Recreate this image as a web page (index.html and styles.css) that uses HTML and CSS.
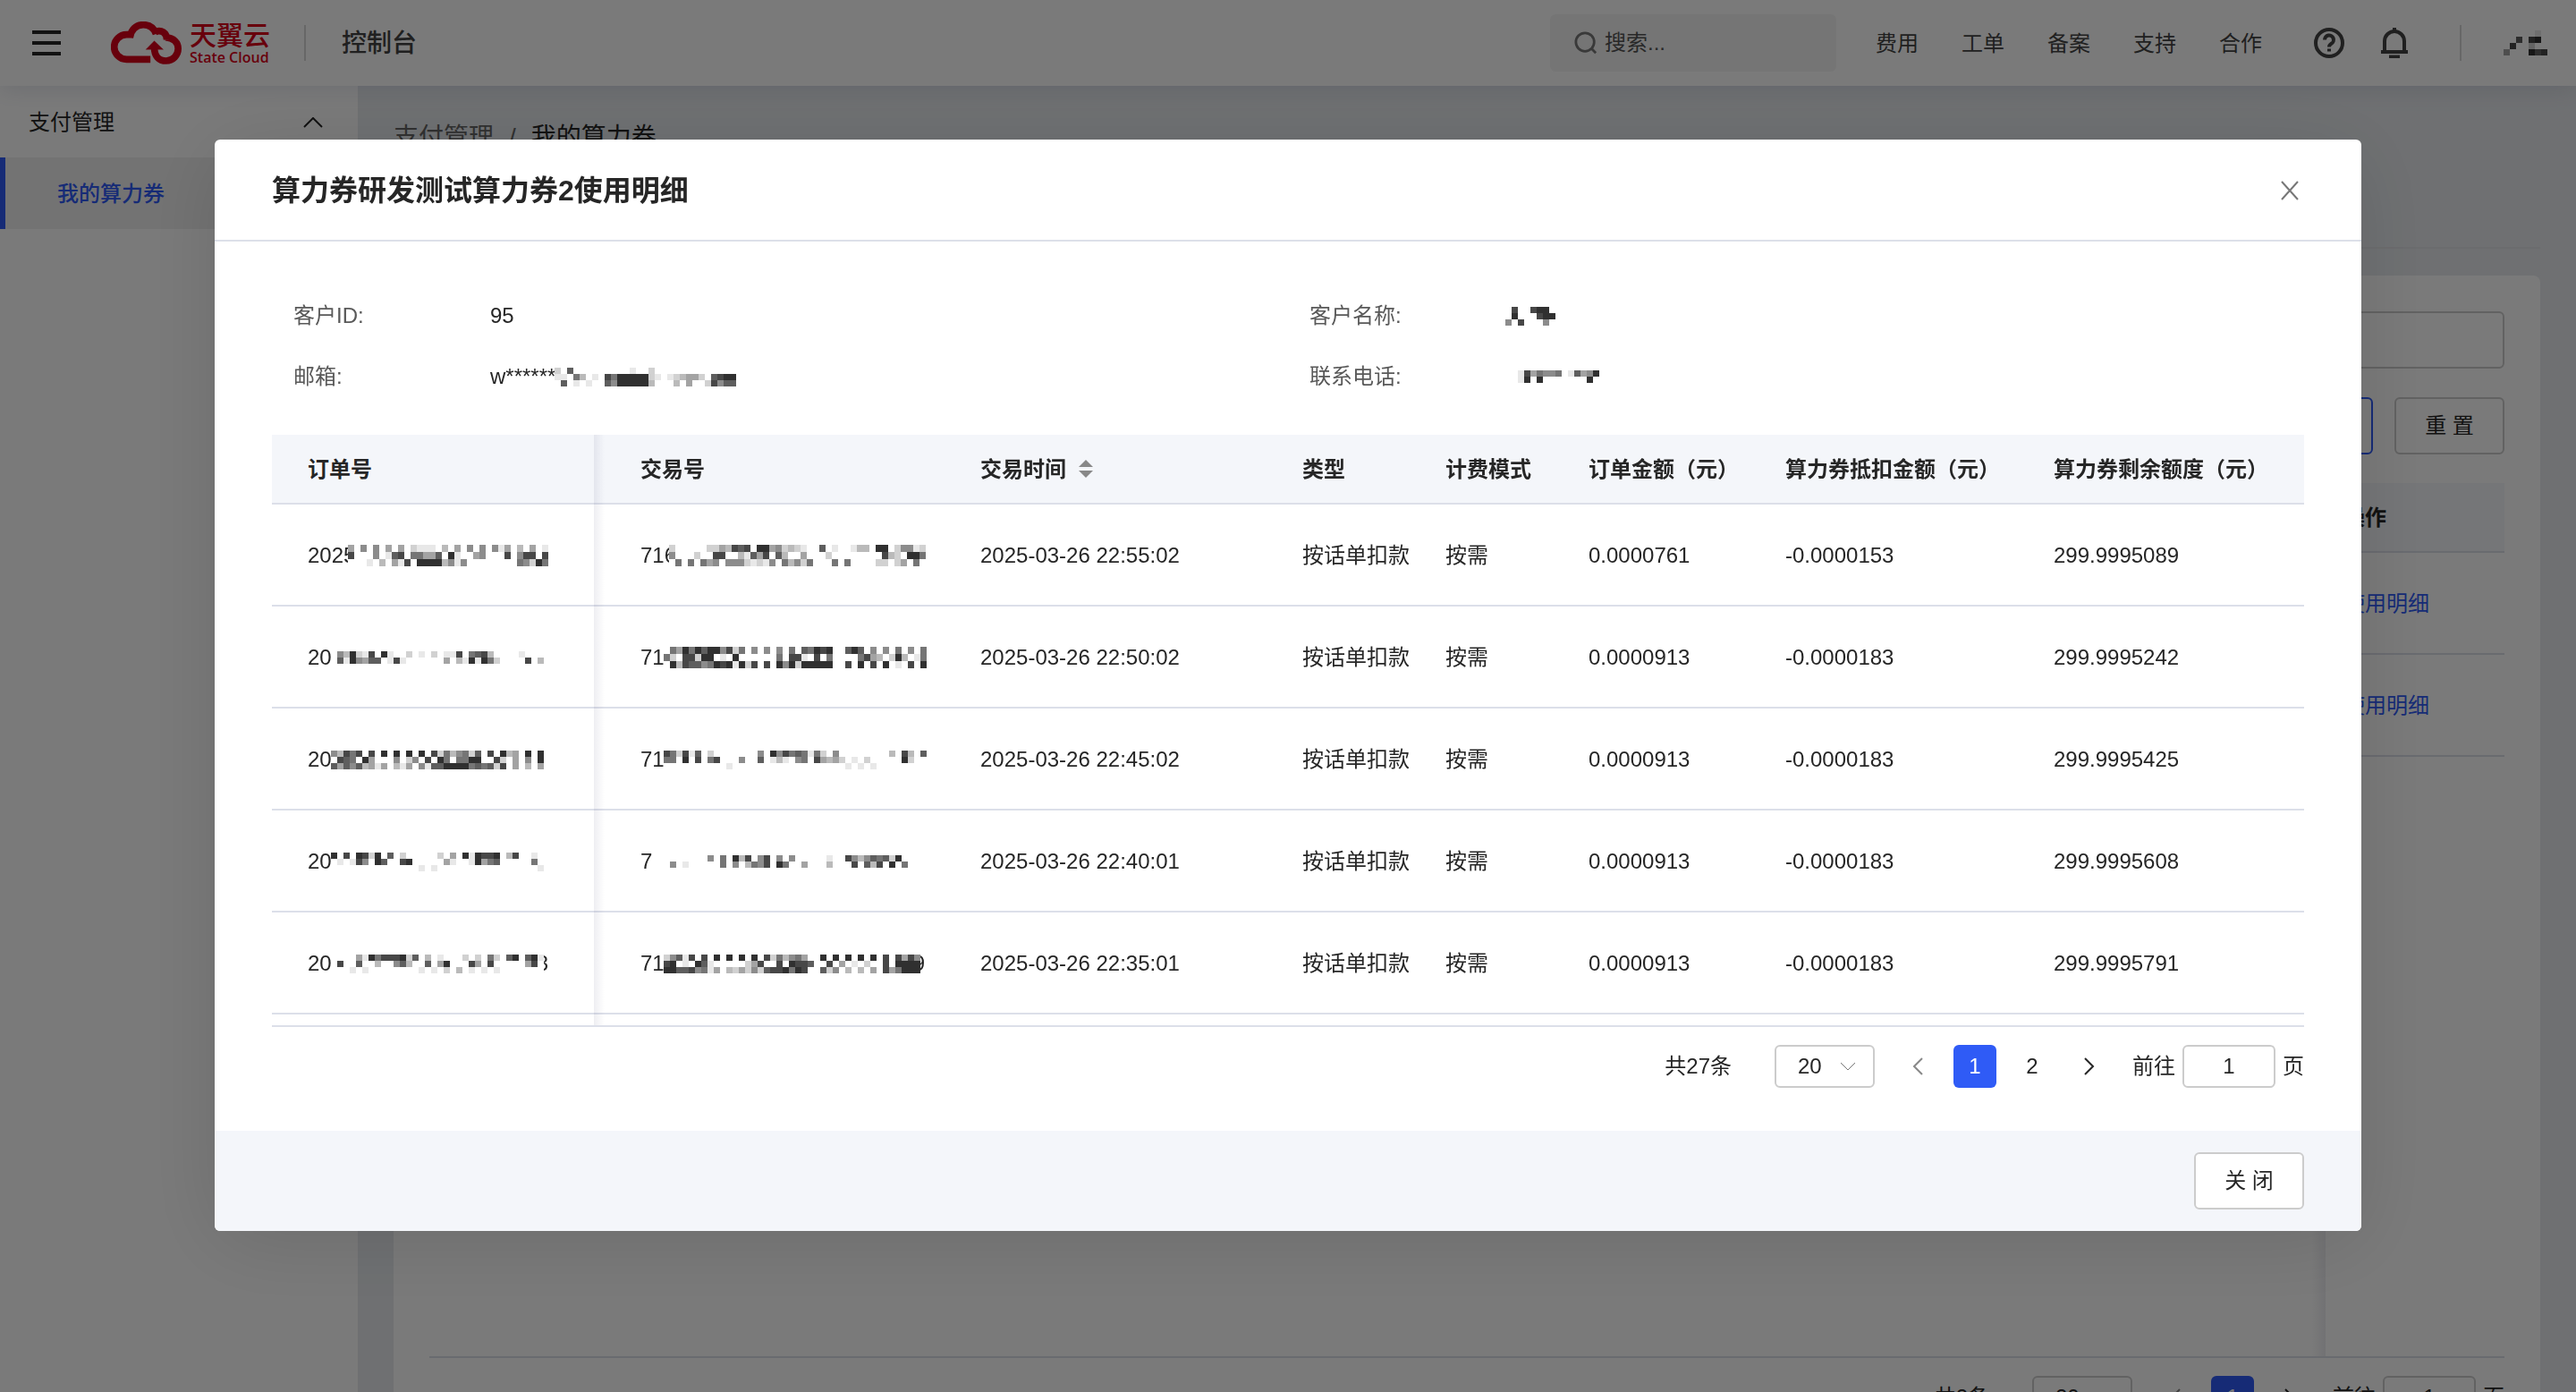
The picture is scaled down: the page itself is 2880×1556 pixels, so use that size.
FILE: index.html
```html
<!DOCTYPE html>
<html lang="zh-CN">
<head>
  <meta charset="UTF-8" />
  <meta name="viewport" content="width=device-width, initial-scale=1.0" />
  <title>我的算力券 - 控制台</title>
  <link rel="stylesheet" href="styles.css">
</head>
<body>
  <div class="app">
    <!-- Top bar -->
    <header class="topbar">
      <button class="menu-btn" aria-label="菜单"><span></span><span></span><span></span></button>
      <a class="logo" href="#">
        <svg class="logo-cloud" viewBox="312 42 236 144">
          <path d="M444 169H364A41.5 41.5 0 0 1 364 86H382M375 97C378 70 396 53 420 53C440 53 456 64 463 84M460 77C480 68 500 80 499 104M495 95C524 98 537 114 537 133A40 41 0 0 1 497 174C472 174 457 158 457 128" fill="none" stroke="#d9001b" stroke-width="23" />
          <path d="M457 107L487 136H429Z" fill="#d9001b" />
        </svg>
        <span class="logo-text"><b>天翼云</b><small>State Cloud</small></span>
      </a>
      <i class="divider"></i>
      <span class="console">控制台</span>
      <label class="search">
        <svg viewBox="0 0 28 28"><circle cx="13" cy="13" r="11" /><path d="M21 21l5 5" /></svg>
        <input type="text" placeholder="搜索..." aria-label="搜索" />
      </label>
      <nav>
        <a href="#">费用</a>
        <a href="#">工单</a>
        <a href="#">备案</a>
        <a href="#">支持</a>
        <a href="#">合作</a>
      </nav>
      <button class="icon-btn help" aria-label="帮助">
        <svg viewBox="0 0 34 34"><circle cx="17" cy="17" r="15" /><path d="M12 13.5a5 5 0 1 1 7.5 4.3C17.5 19 17 19.7 17 21.5M17 23.5v3" /></svg>
      </button>
      <button class="icon-btn bell" aria-label="通知">
        <svg viewBox="0 0 34 34"><path d="M2 27h30M6 27V15a11 11 0 0 1 22 0v12M17 0v5M11 32.5h12" /></svg>
      </button>
      <i class="divider"></i>
      <svg class="mosaic user" data-rows=".....1.|..7.89.|.8..2..|4...978"></svg>
    </header>

    <div class="layout">
      <aside>
        <button class="menu-group">支付管理
          <svg viewBox="0 0 22 12"><path d="M1 11L11 1l10 10" /></svg>
        </button>
        <a class="menu-item" href="#">我的算力券</a>
      </aside>

      <main>
        <div class="breadcrumb"><a href="#">支付管理</a><span>/</span><b>我的算力券</b></div>
        <section class="card">
          <input class="filter" type="text" aria-label="筛选" />
          <div class="actions">
            <button class="btn primary">查 询</button>
            <button class="btn">重 置</button>
          </div>
          <div class="list">
            <table>
              <thead><tr><th>算力券</th><th class="op">操作</th></tr></thead>
              <tbody>
                <tr><td></td><td class="op"><a href="#">使用明细</a></td></tr>
                <tr><td></td><td class="op"><a href="#">使用明细</a></td></tr>
              </tbody>
            </table>
            <div class="fixed-edge"></div>
          </div>
          <div class="pagination">
            <span class="total">共2条</span>
            <span class="size">
              <select aria-label="每页条数"><option>20</option></select>
              <svg viewBox="0 0 16 10"><path d="M0 1l8 8 8-8" /></svg>
            </span>
            <button class="page prev" aria-label="上一页"><svg viewBox="0 0 12 20"><path d="M11 1L2 10l9 9" /></svg></button>
            <button class="page active">1</button>
            <button class="page" aria-label="下一页"><svg viewBox="0 0 12 20"><path d="M1 1l9 9-9 9" /></svg></button>
            <label class="jump">前往<input type="text" value="1" />页</label>
          </div>
        </section>
      </main>
    </div>
  </div>

  <!-- Usage detail dialog -->
  <div class="mask">
    <div class="modal" role="dialog" aria-labelledby="modal-title">
      <div class="modal-header">
        <h2 id="modal-title">算力券研发测试算力券2使用明细</h2>
        <button class="close" aria-label="关闭"><svg viewBox="0 0 22 22"><path d="M2 1l18 20M20 1L2 21" /></svg></button>
      </div>
      <div class="modal-body">
        <dl class="info">
          <div><dt>客户ID:</dt><dd>95</dd></div>
          <div><dt>客户名称:</dt><dd><svg class="mosaic" data-rows=".8..899.|.9...899|5.8...5."></svg></dd></div>
          <div><dt>邮箱:</dt><dd>w******<svg class="mosaic" data-rows="2.7.........1..2.............|11.63.1.869999921.12344 2.7899|.7.1.1..75999993...3.4..28577"></svg></dd></div>
          <div><dt>联系电话:</dt><dd><svg class="mosaic" data-rows="..1846556.17459|..19.9.......9."></svg></dd></div>
        </dl>

        <div class="table-scroll">
          <table class="detail">
            <colgroup>
              <col class="c-order"><col class="c-trade"><col class="c-time"><col class="c-type"><col class="c-mode"><col class="c-amount"><col class="c-deduct"><col class="c-left">
            </colgroup>
            <thead>
              <tr>
                <th>订单号</th>
                <th>交易号</th>
                <th>交易时间<svg class="sort" viewBox="0 0 16 20"><path d="M8 0l8 8H0zM8 20l8-8H0z" /></svg></th>
                <th>类型</th>
                <th>计费模式</th>
                <th>订单金额（元）</th>
                <th>算力券抵扣金额（元）</th>
                <th>算力券剩余额度（元）</th>
              </tr>
            </thead>
            <tbody>
              <tr>
                <td><div class="no">2025<svg class="mosaic tall lap" data-rows="4.5.5.4.4.2111.3.4.5.5.514.3.4.1|8...5.178.66447.91..45...8.588.8|...1.3.418.99993515........65296"></svg></div></td>
                <td><div class="no">716<svg class="mosaic tall lap" data-rows="2.....2243878.99452321..7.1..133.99.25512|5...2..88..31748.73..4...2........832.996|.6.6.645.55521215.63526...6.6....22.24.6."></svg></div></td>
                <td>2025-03-26 22:55:02</td><td>按话单扣款</td><td>按需</td><td>0.0000761</td><td>-0.0000153</td><td>299.9995089</td>
              </tr>
              <tr>
                <td><div class="no">20<svg class="mosaic" data-rows=".539218.91..2.1.2.118.6783....1...|.7195477.181......4.3191962....8.3"></svg></div></td>
                <td><div class="no">71<svg class="mosaic tall" data-rows=".649697995826.5.5.5.6.76989..797.5.5.6.5.6|62.88299.1.9......6.881.8.6....6843.293.16|.93877569891928.8.959299999..8.9.8.9.1.8.9"></svg></div></td>
                <td>2025-03-26 22:50:02</td><td>按话单扣款</td><td>按需</td><td>0.0000913</td><td>-0.0000183</td><td>299.9995242</td>
              </tr>
              <tr>
                <td><div class="no">20<svg class="mosaic" data-rows="53868.8.9.9.9.9.82635627.8.934.9.9|.876.94...5.25.8.96.6699..82.4.5.9|74757341 4.314.5177999967672 8.4.3.4"></svg></div></td>
                <td><div class="no">71<svg class="mosaic" data-rows="862817.2.......5.95867616 2.5........3.83.7|66.9.8.68...5..7.131.56.84342.1.2.....92..|..........1..................1.1.1........"></svg></div></td>
                <td>2025-03-26 22:45:02</td><td>按话单扣款</td><td>按需</td><td>0.0000913</td><td>-0.0000183</td><td>299.9995425</td>
              </tr>
              <tr>
                <td><div class="no">20<svg class="mosaic" data-rows="9.8.9829.7.2.....2.4.919889.38..1.|.1.185.97..89.....41..19467.....6.|..............1.1................1"></svg></div></td>
                <td><div class="no">7<svg class="mosaic gap" data-rows=".......5.6.938.58.5.5.....1..853576729.|.5.1.....6.5.3658.96..4...3...8.738.9.6"></svg></div></td>
                <td>2025-03-26 22:40:01</td><td>按话单扣款</td><td>按需</td><td>0.0000913</td><td>-0.0000183</td><td>299.9995608</td>
              </tr>
              <tr>
                <td><div class="no">20<svg class="mosaic" data-rows="....4196888927.3.1...2.2.62.79.791|.8..7..3..573..7.49...84.8.....48.|...1.1........1.1.2.3.1.1.1......."></svg><span class="tail">3</span></div></td>
                <td><div class="no">71<svg class="mosaic" data-rows="25718.8.9.9.9.9.8263564..9.9.9.9.9.8.8485|89.1.971.....248..8.9887..8.4.1.2..8.9999|997785614.32425278896 98..725.3.3.4.846999"></svg><span class="tail">9</span></div></td>
                <td>2025-03-26 22:35:01</td><td>按话单扣款</td><td>按需</td><td>0.0000913</td><td>-0.0000183</td><td>299.9995791</td>
              </tr>
              <tr><td></td><td></td><td></td><td></td><td></td><td></td><td></td><td></td></tr>
            </tbody>
          </table>
        </div>

        <div class="pagination">
          <span class="total">共27条</span>
          <span class="size">
            <select aria-label="每页条数"><option>20</option></select>
            <svg viewBox="0 0 16 10"><path d="M0 1l8 8 8-8" /></svg>
          </span>
          <button class="page prev" aria-label="上一页"><svg viewBox="0 0 12 20"><path d="M11 1L2 10l9 9" /></svg></button>
          <button class="page active">1</button>
          <button class="page">2</button>
          <button class="page" aria-label="下一页"><svg viewBox="0 0 12 20"><path d="M1 1l9 9-9 9" /></svg></button>
          <label class="jump">前往<input type="text" value="1" />页</label>
        </div>
      </div>
      <div class="modal-footer"><button class="btn">关 闭</button></div>
    </div>
  </div>

  <script src="mosaic.js"></script>
</body>
</html>
```
FILE: styles.css
```css
* {
  box-sizing: border-box;
}
body {
  margin: 0;
  font-family: "Liberation Sans", "Noto Sans CJK SC", sans-serif;
  font-size: 24px;
  line-height: 36px;
  color: #262626;
  overflow: hidden;
}
button, input, select {
  font: inherit;
  color: inherit;
  margin: 0;
}
button {
  background: none;
  border: none;
  padding: 0;
  cursor: pointer;
}
a {
  color: inherit;
  text-decoration: none;
}
svg {
  flex: none;
  fill: none;
  stroke: currentColor;
}
.app {
  display: flex;
  flex-direction: column;
  height: 100vh;
  overflow: hidden;
}

/* Top bar */
.topbar {
  position: relative;
  z-index: 2;
  display: flex;
  align-items: center;
  flex: none;
  height: 96px;
  padding: 0 32px 0 36px;
  background: #fff;
  box-shadow: 0 4px 24px rgba(60, 70, 110, 0.14);
}
.menu-btn {
  display: flex;
  flex-direction: column;
  gap: 8px;
  width: 32px;
  margin-right: 56px;
}
.menu-btn span {
  height: 4px;
  background: #262626;
}
.logo {
  display: flex;
  align-items: center;
  gap: 9px;
  color: #d9001b;
}
.logo-cloud {
  width: 79px;
  height: 48px;
}
.logo-text {
  display: flex;
  flex-direction: column;
  width: 88px;
}
.logo-text b {
  font-size: 30px;
  font-weight: 500;
  line-height: 32px;
  white-space: nowrap;
}
.logo-text small {
  font: 600 16px/16px "Open Sans", sans-serif;
  white-space: nowrap;
}
.divider {
  width: 2px;
  height: 40px;
  background: #d8d8d8;
  margin: 0 40px;
}
.console {
  padding-top: 2px;
  font-size: 28px;
  font-weight: 500;
  color: #444;
  margin-right: auto;
}
.search {
  display: flex;
  align-items: center;
  gap: 8px;
  width: 320px;
  height: 64px;
  padding: 0 27px;
  background: #f5f5f5;
  border-radius: 6px;
  margin-right: 44px;
}
.search svg {
  width: 26px;
  height: 26px;
  color: #777;
  stroke-width: 3;
}
.search input {
  width: 200px;
  border: none;
  background: none;
  padding: 0;
}
.search input::placeholder {
  color: #555;
  opacity: 1;
}
nav {
  display: flex;
  gap: 48px;
  padding-top: 2px;
  color: #444;
  margin-right: 58px;
}
.icon-btn {
  width: 34px;
  height: 34px;
}
.icon-btn svg {
  display: block;
  width: 34px;
  height: 34px;
  color: #444;
  stroke-width: 4;
}
.bell {
  margin: 0 16px 0 39px;
}
.bell + .divider {
  margin-right: 48px;
}

/* Side menu */
.layout {
  display: flex;
  flex: 1;
  min-height: 0;
}
aside {
  flex: none;
  width: 400px;
  background: #fff;
  box-shadow: 0 0 20px rgba(60, 70, 110, 0.12);
}
.menu-group {
  display: flex;
  align-items: center;
  justify-content: space-between;
  width: 100%;
  height: 80px;
  padding: 2px 39px 0 32px;
}
.menu-group svg {
  width: 22px;
  height: 12px;
  stroke-width: 2;
}
.menu-item {
  display: flex;
  align-items: center;
  height: 80px;
  padding: 2px 0 0 58px;
  border-left: 6px solid #2f5bf6;
  background: #f0f0f0;
  color: #2f5bf6;
  font-weight: 500;
}

/* Page content */
main {
  flex: 1;
  padding: 0 40px;
  background: #e8ebef;
}
.breadcrumb {
  display: flex;
  gap: 17px;
  height: 182px;
  margin-bottom: 30px;
  padding-top: 40px;
  border-bottom: 2px solid #e0e2e6;
  font-size: 28px;
  color: #666;
}
.breadcrumb b {
  font-weight: 400;
  color: #262626;
}
.card {
  padding: 40px;
  background: #fff;
  border-radius: 8px;
}
.filter {
  display: block;
  width: 100%;
  height: 64px;
  border: 2px solid #ccc;
  border-radius: 6px;
}
.actions {
  display: flex;
  justify-content: flex-end;
  gap: 24px;
  margin: 32px 0;
}
.btn {
  width: 123px;
  height: 64px;
  border: 2px solid #ccc;
  border-radius: 6px;
  background: #fff;
}
.btn.primary {
  border-color: #2f5bf6;
  color: #2f5bf6;
}
table {
  width: 100%;
  border-collapse: separate;
  border-spacing: 0;
  table-layout: fixed;
}
th, td {
  padding: 2px 0 0 20px;
  border-bottom: 2px solid #dcdfe9;
  text-align: left;
  white-space: nowrap;
}
th {
  height: 78px;
  background: #f4f6fa;
  font-weight: 600;
}
td {
  height: 114px;
}
.list {
  position: relative;
  height: 978px;
  border-bottom: 2px solid #dce0e9;
}
.fixed-edge {
  position: absolute;
  top: 0;
  bottom: 0;
  right: 200px;
  width: 16px;
  background: linear-gradient(to left, rgba(40, 40, 90, 0.08), rgba(40, 40, 90, 0));
}
.op {
  width: 200px;
}
.op a {
  color: #2f5bf6;
}

/* Pagination */
.pagination {
  display: flex;
  align-items: center;
  justify-content: flex-end;
  gap: 16px;
  margin-top: 20px;
}
.total {
  margin-right: 32px;
}
.size {
  position: relative;
  margin-right: 8px;
}
.size select {
  display: block;
  appearance: none;
  width: 112px;
  height: 48px;
  padding: 0 0 0 24px;
  border: 2px solid #ccc;
  border-radius: 6px;
  background: #fff;
}
.size svg {
  position: absolute;
  right: 22px;
  top: 19px;
  width: 16px;
  height: 10px;
  color: #777;
}
.page {
  display: flex;
  align-items: center;
  justify-content: center;
  width: 48px;
  height: 48px;
  border-radius: 6px;
}
.page svg {
  width: 12px;
  height: 20px;
  stroke-width: 2;
}
.prev {
  color: #888;
}
.page.active {
  background: #2f5bf6;
  color: #fff;
}
.jump {
  display: flex;
  align-items: center;
  gap: 8px;
  margin-left: 8px;
}
.jump input {
  width: 104px;
  height: 48px;
  border: 2px solid #ccc;
  border-radius: 6px;
  text-align: center;
}

/* Dialog */
.mask {
  position: fixed;
  inset: 0;
  z-index: 10;
  padding: 156px 240px 0;
  background: rgba(0, 0, 0, 0.52);
}
.modal {
  background: #fff;
  border-radius: 6px;
  overflow: hidden;
  box-shadow: 0 12px 96px rgba(0, 0, 0, 0.12);
}
.modal-header {
  display: flex;
  align-items: center;
  justify-content: space-between;
  height: 114px;
  padding: 2px 69px 0 64px;
  border-bottom: 2px solid #dce0e9;
}
.modal-header h2 {
  margin: 0;
  font-size: 32px;
  font-weight: 600;
}
.close svg {
  display: block;
  width: 22px;
  height: 22px;
  color: #777;
  stroke-width: 2;
}
.modal-body {
  padding: 48px 64px;
}
.info {
  display: grid;
  grid-template-columns: 1fr 1fr;
  margin: 0 0 32px;
}
.info div {
  display: flex;
  align-items: center;
  height: 68px;
  padding: 2px 0 0 24px;
}
.info dt {
  width: 220px;
  color: #595959;
}
.info dd {
  display: flex;
  align-items: center;
  margin: 0;
}
.table-scroll {
  height: 662px;
  overflow: hidden;
  border-bottom: 2px solid #dcdfe9;
}
.c-order { width: 360px; }
.c-trade { width: 412px; }
.c-time { width: 360px; }
.c-type { width: 160px; }
.c-mode { width: 160px; }
.c-amount { width: 220px; }
.c-deduct { width: 300px; }
.c-left { width: 300px; }
.detail th:nth-child(1), .detail td:nth-child(1) {
  position: relative;
  padding-left: 40px;
}
.detail th:nth-child(2), .detail td:nth-child(2) {
  padding-left: 52px;
}
/* edge shadow of the fixed column */
.detail tr > :first-child::after {
  content: "";
  position: absolute;
  top: 0;
  bottom: -2px;
  left: 100%;
  width: 12px;
  background: linear-gradient(to right, rgba(40, 40, 90, 0.08), rgba(40, 40, 90, 0));
}
.sort {
  width: 16px;
  height: 20px;
  margin-left: 14px;
  vertical-align: -1px;
  fill: #888;
  stroke: none;
}
.no {
  display: flex;
  align-items: center;
}
.modal-footer {
  display: flex;
  justify-content: flex-end;
  padding: 24px 64px;
  background: #f4f6fa;
}

/* Masked private data */
.mosaic {
  position: relative;
  z-index: 1;
  margin-left: -1px;
  background: #fff;
  stroke: none;
}
.mosaic.lap {
  margin-left: -8px;
}
.mosaic.gap {
  margin-left: 13px;
}
.tail {
  margin-left: -8px;
}
```
FILE: mosaic.js
```js
// each character is one block: "." is empty, 1-9 go from light to dark
document.querySelectorAll(".mosaic").forEach(svg => {
  const rows = svg.dataset.rows.replace(/ /g, "").split("|");
  const w = 7;
  const h = svg.classList.contains("tall") ? 8 : 7;
  svg.setAttribute("width", rows[0].length * w);
  svg.setAttribute("height", rows.length * h);
  rows.forEach((row, y) => {
    [...row].forEach((c, x) => {
      if (c === ".") return;
      const g = 255 - c * 23;
      const rect = document.createElementNS("http://www.w3.org/2000/svg", "rect");
      rect.setAttribute("x", x * w);
      rect.setAttribute("y", y * h);
      rect.setAttribute("width", w);
      rect.setAttribute("height", h);
      rect.setAttribute("fill", `rgb(${g}, ${g}, ${g})`);
      svg.appendChild(rect);
    });
  });
});
```
